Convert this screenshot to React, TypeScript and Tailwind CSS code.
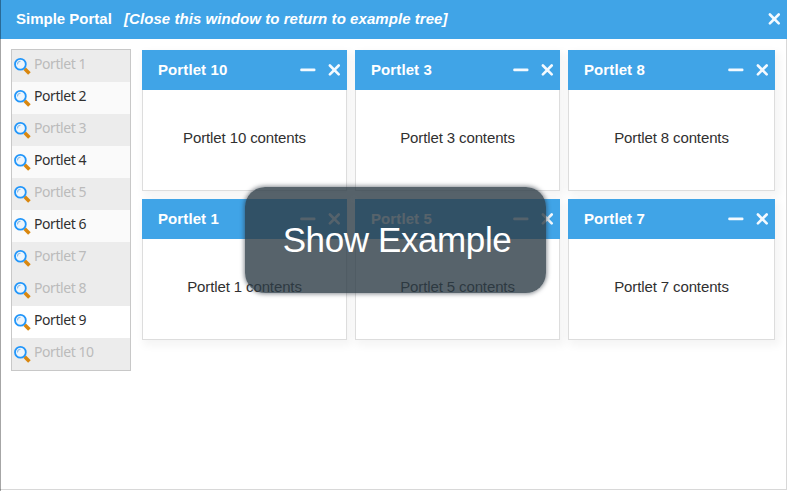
import React from "react";

const sans = "font-['Liberation_Sans',Arial,sans-serif]";

function Magnifier() {
  return (
    <svg width="18" height="18" viewBox="0 0 18 18" className="shrink-0">
      <path d="M10.7 10.8 L15.4 15.5" stroke="#d9870f" strokeWidth="3.6" />
      <circle cx="6.4" cy="6.3" r="5.4" fill="#edf5fc" stroke="#2196fa" strokeWidth="1.8" />
      <path d="M3.4 6.4 A3.2 3.2 0 0 1 6.5 3.3" fill="none" stroke="#8dbde8" strokeWidth="1.1" />
    </svg>
  );
}

function CloseIcon() {
  return (
    <svg width="13" height="12" viewBox="0 0 13 12" className="shrink-0">
      <path d="M1.9 1.5 L10.7 10.3 M10.7 1.5 L1.9 10.3" stroke="#f4faff" strokeWidth="2.6" strokeLinecap="round" />
    </svg>
  );
}

function MinimizeIcon() {
  return (
    <svg width="16" height="4" viewBox="0 0 16 4" className="shrink-0">
      <rect x="0.2" y="0.5" width="15.3" height="2.8" rx="1.2" fill="#f4faff" />
    </svg>
  );
}

const items = [
  { n: 1, on: false, bg: "bg-[#ececec]" },
  { n: 2, on: true, bg: "bg-[#fafafa]" },
  { n: 3, on: false, bg: "bg-[#ececec]" },
  { n: 4, on: true, bg: "bg-[#fafafa]" },
  { n: 5, on: false, bg: "bg-[#ececec]" },
  { n: 6, on: true, bg: "bg-[#fafafa]" },
  { n: 7, on: false, bg: "bg-[#ececec]" },
  { n: 8, on: false, bg: "bg-[#ececec]" },
  { n: 9, on: true, bg: "bg-white" },
  { n: 10, on: false, bg: "bg-[#ececec]" },
];

function Portlet({ n }: { n: number }) {
  return (
    <section className="flex h-[141px] flex-col bg-white shadow-[3px_4px_8px_2px_rgba(0,0,0,0.045)]">
      <header className="flex h-10 shrink-0 items-center bg-[#40a4e7] pl-4 pr-[6px] text-white">
        <h2 className="flex-1 text-[15px] font-bold leading-5 tracking-[0.1px]">Portlet {n}</h2>
        <MinimizeIcon />
        <span className="w-3" />
        <CloseIcon />
      </header>
      <div className="flex flex-1 items-center justify-center border border-t-0 border-[#dddddd] pb-1 text-[15px] leading-5 tracking-[-0.12px] text-[#303030]">
        Portlet {n} contents
      </div>
    </section>
  );
}

export default function App() {
  return (
    <div className={`relative flex h-[491px] w-[787px] flex-col overflow-hidden bg-white ${sans}`}>
      <header className="flex h-[39px] shrink-0 items-center bg-[#40a4e7] pb-px pl-4 pr-[6px] text-[15px] font-bold leading-5 text-white">
        <h1 className="w-[108px]">Simple Portal</h1>
        <span className="flex-1 italic tracking-[0.06px]">[Close this window to return to example tree]</span>
        <CloseIcon />
      </header>
      <main className="mb-px flex min-h-0 flex-1 items-start border-b border-r border-[#d8d8d8] pl-[11px] pt-[10px]">
        <ul className="w-[120px] border border-[#c8c8c8] font-['Noto_Sans',sans-serif]">
          {items.map((item) => (
            <li
              key={item.n}
              className={`flex h-8 items-center gap-[2px] pl-[2px] text-[14px] tracking-[-0.43px] ${item.bg} ${item.on ? "text-[#303030]" : "text-[#bbbbbb]"}`}
            >
              <span className="pt-[1px]"><Magnifier /></span>
              <span className="pb-[5px]">Portlet {item.n}</span>
            </li>
          ))}
        </ul>
        <div className="ml-[11px] mt-[1px] grid grid-cols-[205px_205px_207px] gap-2">
          {[10, 3, 8, 1, 5, 7].map((n) => (
            <Portlet key={n} n={n} />
          ))}
        </div>
      </main>
      <div className="absolute inset-y-0 left-0 w-px bg-black/35" />
      <button className="absolute left-[245px] top-[187px] flex h-[106px] w-[301px] items-center justify-center rounded-[20px] bg-[rgba(45,60,70,0.8)] pl-[3px] pt-px text-[35px] tracking-[-0.4px] text-white shadow-[0_0_4px_1px_rgba(40,50,60,0.55)]">
        Show Example
      </button>
    </div>
  );
}
